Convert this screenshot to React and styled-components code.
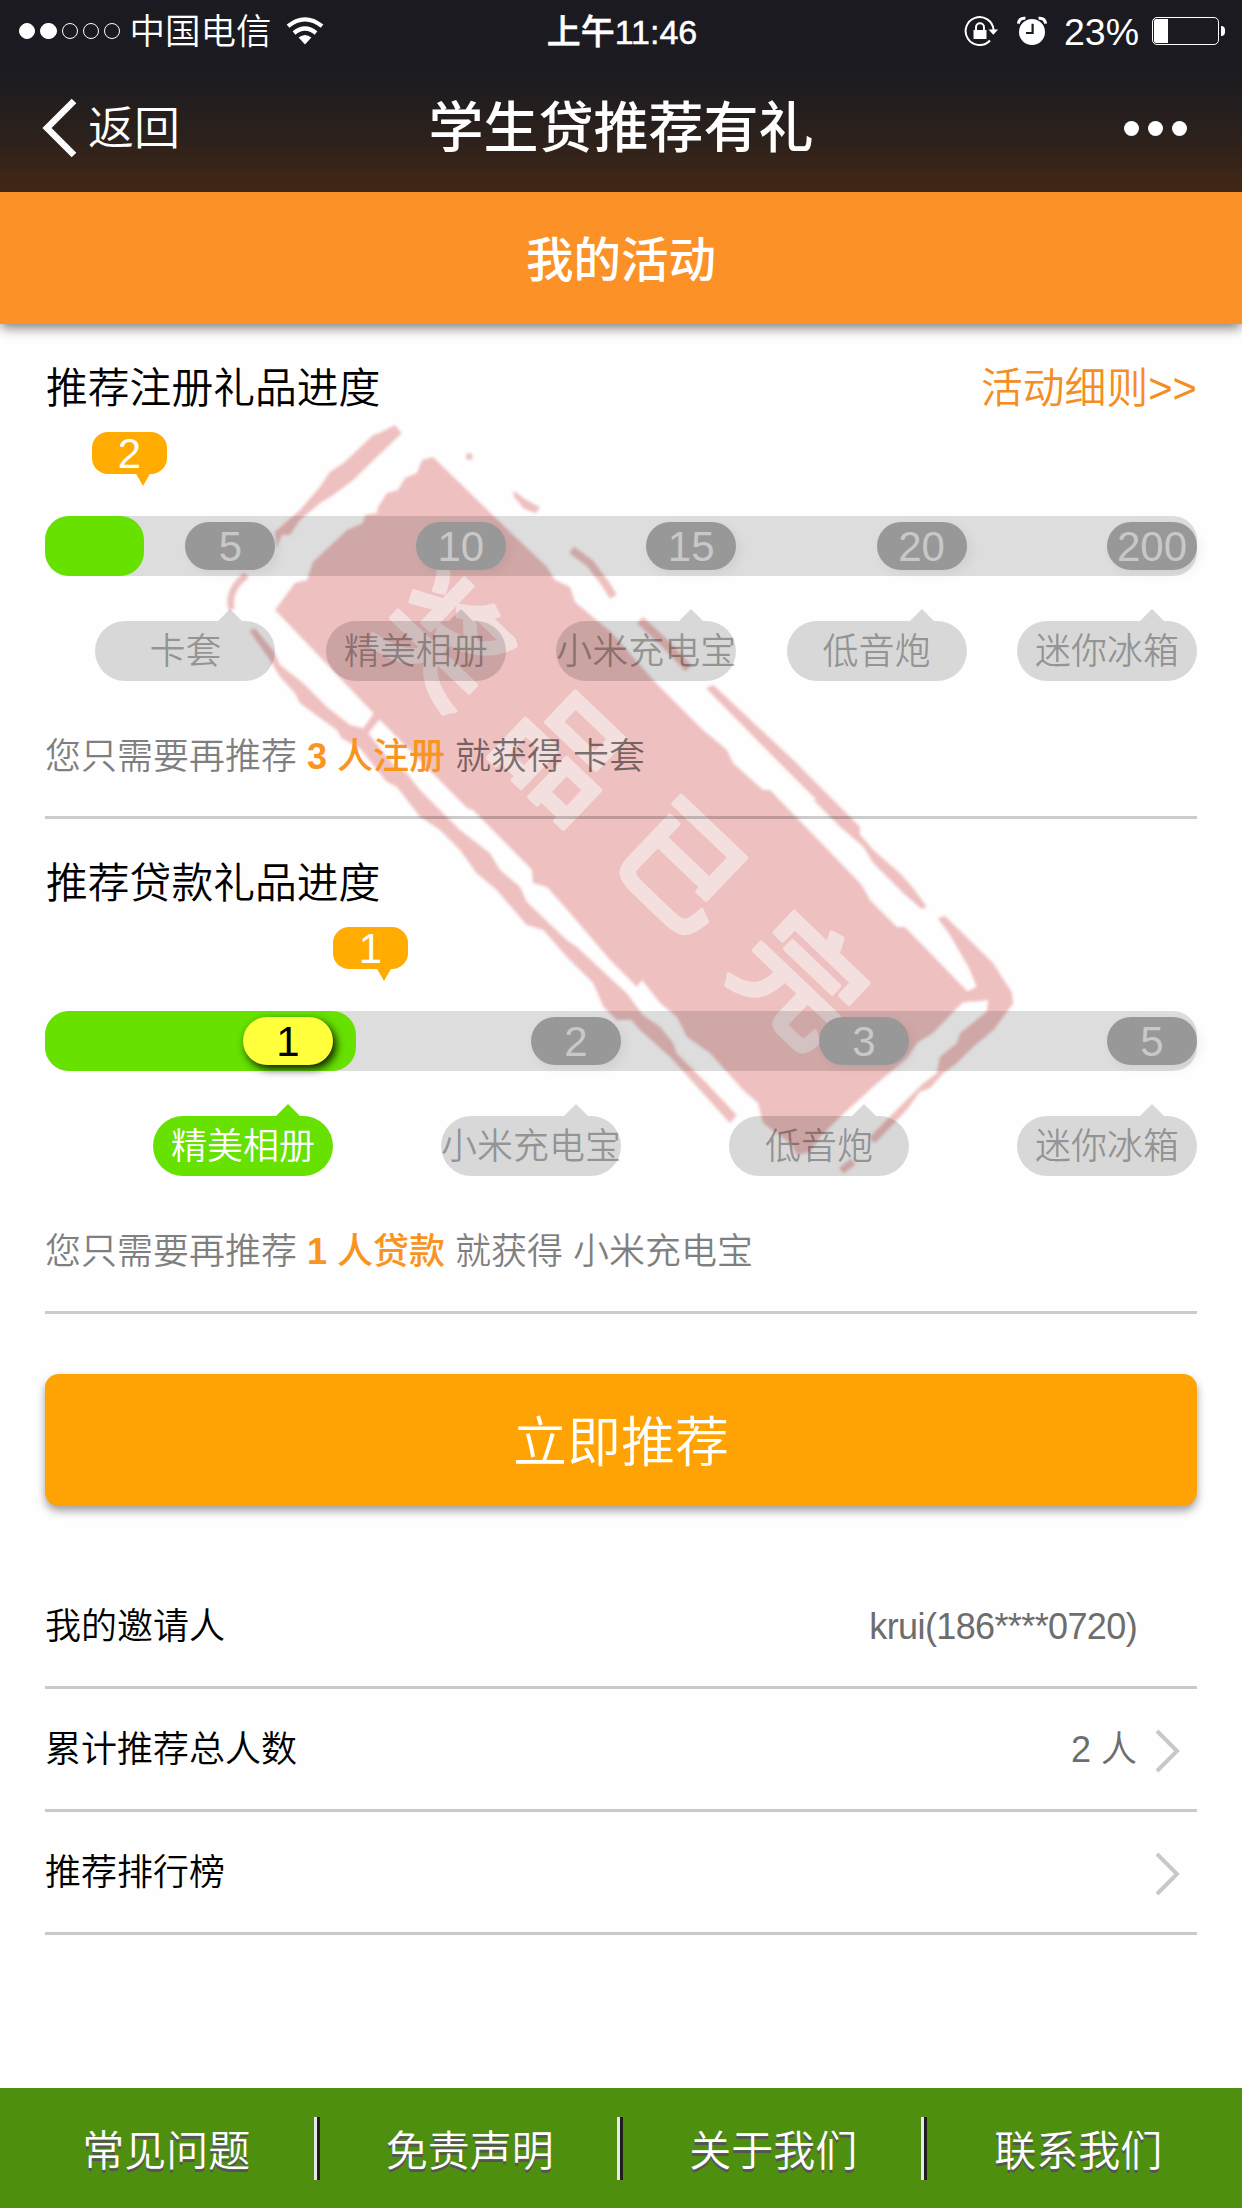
import React from 'react';
import styled, { createGlobalStyle } from 'styled-components';

const GlobalStyle = createGlobalStyle`
  * { box-sizing: border-box; }
  body {
    margin: 0;
    background: #fefefe;
    font-family: "Liberation Sans", "Noto Sans CJK SC", sans-serif;
    font-weight: 350;
    color: #000;
  }
`;

const Page = styled.div`
  width: 1242px;
  height: 2208px;
  display: flex;
  flex-direction: column;
  overflow: hidden;
`;

const Header = styled.header`
  height: 192px;
  color: #fff;
  background: linear-gradient(#1a1a20 0%, #1c1b20 38%, #2c211c 72%, #432815 100%);
`;

const StatusBar = styled.div`
  height: 62px;
  display: grid;
  grid-template-columns: 1fr auto 1fr;
  align-items: center;
  padding: 0 17px 0 19px;
`;

const StatusSide = styled.div`
  display: flex;
  align-items: center;
  justify-content: ${(p) => (p.$end ? 'flex-end' : 'flex-start')};
`;

const Signal = styled.div`
  display: flex;
  gap: 5px;
  margin-right: 9px;
`;

const SignalDot = styled.i`
  width: 16.3px;
  height: 16.3px;
  border-radius: 50%;
  border: 1.5px solid #fff;
  background: ${(p) => (p.$on ? '#fff' : 'transparent')};
`;

const StatusText = styled.span`
  font-size: ${(p) => p.$size || 35.5}px;
  line-height: 60px;
  padding-top: 2px;
  white-space: nowrap;
`;

const Clock = styled.span`
  font-size: 34px;
  line-height: 60px;
  padding-top: 1px;
  font-weight: 500;
  white-space: nowrap;
  -webkit-text-stroke: 0.5px #fff;
`;

const Battery = styled.div`
  width: 67px;
  height: 28px;
  margin: 0 2px 0 13px;
  padding: 1px;
  border: 1.5px solid #fff;
  border-radius: 5px;
`;

const BatteryLevel = styled.div`
  width: 14px;
  height: 100%;
  background: #fff;
  border-radius: 2px 0 0 2px;
`;

const BatteryTip = styled.div`
  width: 4px;
  height: 10px;
  background: #fff;
  border-radius: 0 4px 4px 0;
`;

const NavBar = styled.nav`
  height: 130px;
  display: grid;
  grid-template-columns: 1fr auto 1fr;
  align-items: center;
  padding: 0 42px;
`;

const Back = styled.a`
  display: flex;
  align-items: center;
  gap: 10px;
  font-size: 46px;
  line-height: 132px;
`;

const Title = styled.h1`
  margin: 0;
  font-size: 55px;
  line-height: 131px;
  font-weight: 500;
  white-space: nowrap;
`;

const More = styled.div`
  display: flex;
  justify-content: flex-end;
  gap: 9px;
  padding-right: 13px;
  i {
    width: 15px;
    height: 15px;
    border-radius: 50%;
    background: #fff;
  }
`;

const Banner = styled.div`
  height: 132px;
  flex: none;
  line-height: 138px;
  text-align: center;
  font-size: 47.5px;
  font-weight: 500;
  color: #fff;
  background: #fc9127;
  box-shadow: 0 5px 11px -1px rgba(30, 20, 30, 0.55);
`;

const Content = styled.main`
  position: relative;
  flex: 1;
  padding: 0 45px;
`;

const Stamp = styled.svg`
  position: absolute;
  left: 220px;
  top: 76px;
  width: 820px;
  height: 800px;
`;

const Section = styled.section`
  position: relative;
  height: 495px;
  padding-top: 32px;
  border-bottom: 3px solid rgba(0, 0, 0, 0.2);
  display: flex;
  flex-direction: column;
`;

const SectionHead = styled.div`
  display: flex;
  justify-content: space-between;
  height: 64px;
  padding-left: 1px;
  font-size: 41.8px;
  line-height: 66px;
`;

const RulesLink = styled.a`
  color: #f68d22;
`;

const Bubble = styled.div`
  position: relative;
  width: 75px;
  height: 42px;
  margin: 12px 0 42px ${(p) => p.$left}px;
  border-radius: 16px;
  background: #ffab00;
  color: #fff;
  text-align: center;
  font-size: 42px;
  line-height: 43px;
  &::after {
    content: "";
    position: absolute;
    left: 43px;
    top: 40px;
    border: solid transparent;
    border-width: 14px 8px 0;
    border-top-color: #ffab00;
  }
`;

const Track = styled.div`
  position: relative;
  height: 60px;
  border-radius: 24px;
  background: rgba(0, 0, 0, 0.13);
  display: grid;
  grid-template-columns: repeat(${(p) => p.$count}, 1fr);
  align-items: center;
  justify-items: end;
`;

const Fill = styled.div`
  position: absolute;
  left: 0;
  top: 0;
  height: 60px;
  border-radius: 24px;
  background: #66e100;
`;

const Step = styled.span`
  position: relative;
  width: 90px;
  height: 48px;
  border-radius: 24px;
  text-align: center;
  font-size: 42px;
  line-height: 49px;
  color: ${(p) => (p.$reached ? '#000' : '#c8c8c8')};
  background: ${(p) => (p.$reached ? '#ffff3c' : '#989898')};
  box-shadow: ${(p) =>
    p.$reached ? '3px 4px 9px rgba(0, 0, 0, 0.9)' : '4px 4px 8px rgba(80, 80, 80, 0.08)'};
`;

const Gifts = styled.div`
  margin-top: 45px;
  display: grid;
  grid-template-columns: repeat(${(p) => p.$count}, 1fr);
  justify-items: end;
`;

const Gift = styled.span`
  --fill: ${(p) => (p.$reached ? '#66e100' : 'rgba(0, 0, 0, 0.15)')};
  position: relative;
  width: 180px;
  height: 60px;
  border-radius: 30px;
  background: var(--fill);
  color: ${(p) => (p.$reached ? '#fff' : 'rgba(0, 0, 0, 0.32)')};
  text-align: center;
  font-size: 36px;
  line-height: 62px;
  white-space: nowrap;
  &::before {
    content: "";
    position: absolute;
    right: 33px;
    top: -12px;
    border: solid transparent;
    border-width: 0 12px 12px;
    border-bottom-color: var(--fill);
  }
`;

const Hint = styled.p`
  margin: 46px 0 0;
  font-size: 36px;
  line-height: 60px;
  color: rgba(0, 0, 0, 0.5);
  white-space: pre;
`;

const Need = styled.b`
  font-weight: 500;
  color: #f9941e;
`;

const NeedCount = styled.span`
  font-weight: 700;
`;

const Cta = styled.button`
  position: relative;
  display: block;
  width: 100%;
  height: 132px;
  margin: 60px 0 60px;
  padding: 0;
  border: 0;
  border-radius: 14px;
  background: #ffa304;
  color: #fff;
  font: inherit;
  font-size: 54px;
  line-height: 138px;
  box-shadow: 0 5px 8px rgba(30, 20, 30, 0.4);
`;

const Row = styled.div`
  height: 123px;
  border-bottom: 3px solid #ccc8ca;
  display: flex;
  align-items: center;
  font-size: 36px;
  line-height: 120px;
  padding-top: 1px;
`;

const RowValue = styled.span`
  margin-left: auto;
  margin-right: ${(p) => (p.$arrow ? 17 : 60)}px;
  letter-spacing: ${(p) => (p.$tight ? -0.62 : 0)}px;
  color: #6d6d6d;
`;

const ArrowIcon = styled.svg`
  width: 27px;
  height: 44px;
  margin: 3px 16px 0 0;
`;

const Footer = styled.footer`
  height: 120px;
  flex: none;
  padding: 0 12px 0 16px;
  background: #4f8f10;
  display: grid;
  grid-template-columns: repeat(4, 1fr);
  align-items: center;
`;

const FooterLink = styled.a`
  height: 63px;
  line-height: 70px;
  text-align: center;
  font-size: 42px;
  color: #fff;
  text-shadow: 0 3px 0 #555;
  border-right: ${(p) => (p.$last ? '0' : '3px solid #1f1f1f')};
  box-shadow: ${(p) => (p.$last ? 'none' : 'inset -3px 0 0 #e8e8e8')};
`;

const StampText = styled.text`
  font-family: "Noto Sans CJK SC", sans-serif;
  font-size: 122px;
  font-weight: 500;
  letter-spacing: 42px;
  fill: #f4dfdf;
  stroke: #f4dfdf;
  stroke-width: 4px;
  stroke-linejoin: round;
`;

const WifiIcon = () => (
  <svg width="38" height="28" viewBox="0 0 38 28" style={{ marginLeft: 14 }}>
    <g fill="none" stroke="#fff" strokeWidth="4.2">
      <path d="M2 9.2 Q19 -4.6 36 9.2" />
      <path d="M8 16 Q19 7 30 16" />
    </g>
    <path d="M12.6 20.6 Q19 15.6 25.4 20.6 L19 27.6z" fill="#fff" />
  </svg>
);

const LockIcon = () => (
  <svg width="36" height="32" viewBox="0 0 36 32">
    <path d="M26 25.5 A14 14 0 1 1 29.6 15" fill="none" stroke="#fff" strokeWidth="2" />
    <path d="M24.5 14.6h9.6l-4.8 5.2z" fill="#fff" />
    <path d="M9.5 15h13v9h-13z" fill="#fff" />
    <path d="M12 15.5v-3.2a4 4 0 0 1 8 0v3.2" fill="none" stroke="#fff" strokeWidth="2" />
  </svg>
);

const AlarmIcon = () => (
  <svg width="30" height="30" viewBox="0 0 30 30" style={{ margin: '0 17px 0 17px' }}>
    <circle cx="15" cy="16" r="13" fill="#fff" />
    <path d="M1.4 7.6 Q2 1.6 8.4 2.2" fill="none" stroke="#fff" strokeWidth="3" />
    <path d="M28.6 7.6 Q28 1.6 21.6 2.2" fill="none" stroke="#fff" strokeWidth="3" />
    <path d="M15.6 7.8v9.2H9" fill="none" stroke="#1b1a1f" strokeWidth="2.2" />
  </svg>
);

const Arrow = () => (
  <ArrowIcon viewBox="0 0 27 44">
    <path d="M3 2 23 22 3 42" fill="none" stroke="#cbc7c9" strokeWidth="4" />
  </ArrowIcon>
);

const SoldOutStamp = () => (
  <Stamp viewBox="220 400 820 800">
    <defs>
      <filter id="soft" x="-5%" y="-5%" width="110%" height="110%">
        <feGaussianBlur stdDeviation="1.5" />
      </filter>
    </defs>
    <g filter="url(#soft)" fill="#efc0c0" stroke="none">
      <path d="M433 457 505 527 547 567 555 580 570 587 575 602 612 633 653 680 703 730 727 750 733 763 763 790 770 790 860 883 863 887 870 900 897 927 905 927 968 992 982 988 980 999 962 1003 933 1033 917 1043 907 1058 873 1087 840 1117 820 1137 810 1152 797 1155 790 1143 763 1123 758 1103 743 1090 710 1053 687 1037 677 1017 660 1003 642 980 637 987 610 960 570 913 547 887 533 883 532 870 473 810 467 808 380 720 275 610 295 583 307 580 313 562 347 530 363 523 365 515 377 513 378 507 387 493 398 490 405 478 417 473 422 460z" />
      <g transform="translate(220 420) scale(.33333)">
        <path d="M525 15 545 40 440 140 400 180 340 225 300 250 240 300 210 345 185 345 170 385 165 335 240 270 300 200 330 155 370 130 460 45 480 38z" />
        <path d="M80 465 Q20 510 35 568" fill="none" stroke="#efc0c0" strokeWidth="20" />
        <path d="M88 632 105 625 165 700 180 735 250 790 320 860 390 915 430 925 465 875 482 895 445 940 520 1035 560 1060 600 1110 660 1170 720 1230 720 1290 660 1230 600 1190 530 1100 500 1085 420 985 365 955 350 930 240 850 225 820 180 770 150 720z" />
        <path d="M1055 390 1110 430 1155 490 1180 530" fill="none" stroke="#efc0c0" strokeWidth="24" />
        <path d="M882 212 915 238 960 262 948 280 912 266 880 228z" />
        <circle cx="748" cy="110" r="10" />
      </g>
      <g transform="translate(460 620) scale(.33333)">
        <path d="M0 630 90 700 120 750 180 800 200 845 320 960 350 980 500 1120 560 1200 500 1200 470 1200 430 1160 400 1090 320 1010 250 930 200 915 110 810 50 760 0 690z" />
        <path d="M738 205 760 195 1000 420 1200 620 1200 660 1140 600 1080 550 900 370z" />
        <path d="M540 0 620 75 685 145" fill="none" stroke="#efc0c0" strokeWidth="26" />
      </g>
      <g transform="translate(640 800) scale(.33333)">
        <path d="M-40 600 0 640 60 680 100 730 110 760 200 850 290 945 270 970 180 870 90 770 0 690 -60 620z" />
        <path d="M520 0 550 0 640 80 700 150 780 220 820 265 860 320 845 328 790 280 700 190 670 140 600 80z" />
        <path d="M893 355 915 348 1060 490 1085 530 1115 575 1120 610 1060 690 1000 740 950 790 910 820 870 865 840 875 800 930 715 1020 700 1030 690 1010 760 940 850 850 890 820 900 770 950 730 960 700 1040 635 1045 600 1000 605 960 600 980 575 1010 560 985 500 950 440 930 405z" />
        <path d="M604 1112 640 1085" fill="none" stroke="#efc0c0" strokeWidth="22" />
      </g>
    </g>
    <StampText x="18" y="45" textAnchor="middle" transform="translate(625 812) rotate(43.7)">
      奖品已完
    </StampText>
  </Stamp>
);

const registerSteps = [
  { n: 5, gift: '卡套' },
  { n: 10, gift: '精美相册' },
  { n: 15, gift: '小米充电宝' },
  { n: 20, gift: '低音炮' },
  { n: 200, gift: '迷你冰箱' },
];

const loanSteps = [
  { n: 1, gift: '精美相册' },
  { n: 2, gift: '小米充电宝' },
  { n: 3, gift: '低音炮' },
  { n: 5, gift: '迷你冰箱' },
];

const Progress = ({ title, link, current, bubbleLeft, fill, steps, need, kind, next }) => (
  <Section>
    <SectionHead>
      <span>{title}</span>
      {link && <RulesLink>{link}</RulesLink>}
    </SectionHead>
    <Bubble $left={bubbleLeft}>{current}</Bubble>
    <Track $count={steps.length}>
      <Fill style={{ width: fill }} />
      {steps.map((s) => (
        <Step key={s.n} $reached={s.n <= current}>{s.n}</Step>
      ))}
    </Track>
    <Gifts $count={steps.length}>
      {steps.map((s) => (
        <Gift key={s.n} $reached={s.n <= current}>{s.gift}</Gift>
      ))}
    </Gifts>
    <Hint>
      您只需要再推荐 <Need><NeedCount>{need}</NeedCount> 人{kind}</Need> 就获得 {next}
    </Hint>
  </Section>
);

export default function App() {
  return (
    <Page>
      <GlobalStyle />
      <Header>
        <StatusBar>
          <StatusSide>
            <Signal>
              {[1, 1, 0, 0, 0].map((on, i) => (
                <SignalDot key={i} $on={on} />
              ))}
            </Signal>
            <StatusText>中国电信</StatusText>
            <WifiIcon />
          </StatusSide>
          <Clock>上午11:46</Clock>
          <StatusSide $end>
            <LockIcon />
            <AlarmIcon />
            <StatusText $size={37.5}>23%</StatusText>
            <Battery>
              <BatteryLevel />
            </Battery>
            <BatteryTip />
          </StatusSide>
        </StatusBar>
        <NavBar>
          <Back>
            <svg width="36" height="60" viewBox="0 0 36 60">
              <path d="M32 3 5 30 32 57" fill="none" stroke="#fff" strokeWidth="6.5" />
            </svg>
            返回
          </Back>
          <Title>学生贷推荐有礼</Title>
          <More><i /><i /><i /></More>
        </NavBar>
      </Header>
      <Banner>我的活动</Banner>
      <Content>
        <SoldOutStamp />
        <Progress
          title="推荐注册礼品进度"
          link="活动细则>>"
          current={2}
          bubbleLeft={47}
          fill={99}
          steps={registerSteps}
          need={3}
          kind="注册"
          next="卡套"
        />
        <Progress
          title="推荐贷款礼品进度"
          current={1}
          bubbleLeft={288}
          fill={311}
          steps={loanSteps}
          need={1}
          kind="贷款"
          next="小米充电宝"
        />
        <Cta>立即推荐</Cta>
        <Row>
          我的邀请人
          <RowValue $tight>krui(186****0720)</RowValue>
        </Row>
        <Row>
          累计推荐总人数
          <RowValue $arrow>2 人</RowValue>
          <Arrow />
        </Row>
        <Row>
          推荐排行榜
          <RowValue $arrow />
          <Arrow />
        </Row>
      </Content>
      <Footer>
        <FooterLink>常见问题</FooterLink>
        <FooterLink>免责声明</FooterLink>
        <FooterLink>关于我们</FooterLink>
        <FooterLink $last>联系我们</FooterLink>
      </Footer>
    </Page>
  );
}
